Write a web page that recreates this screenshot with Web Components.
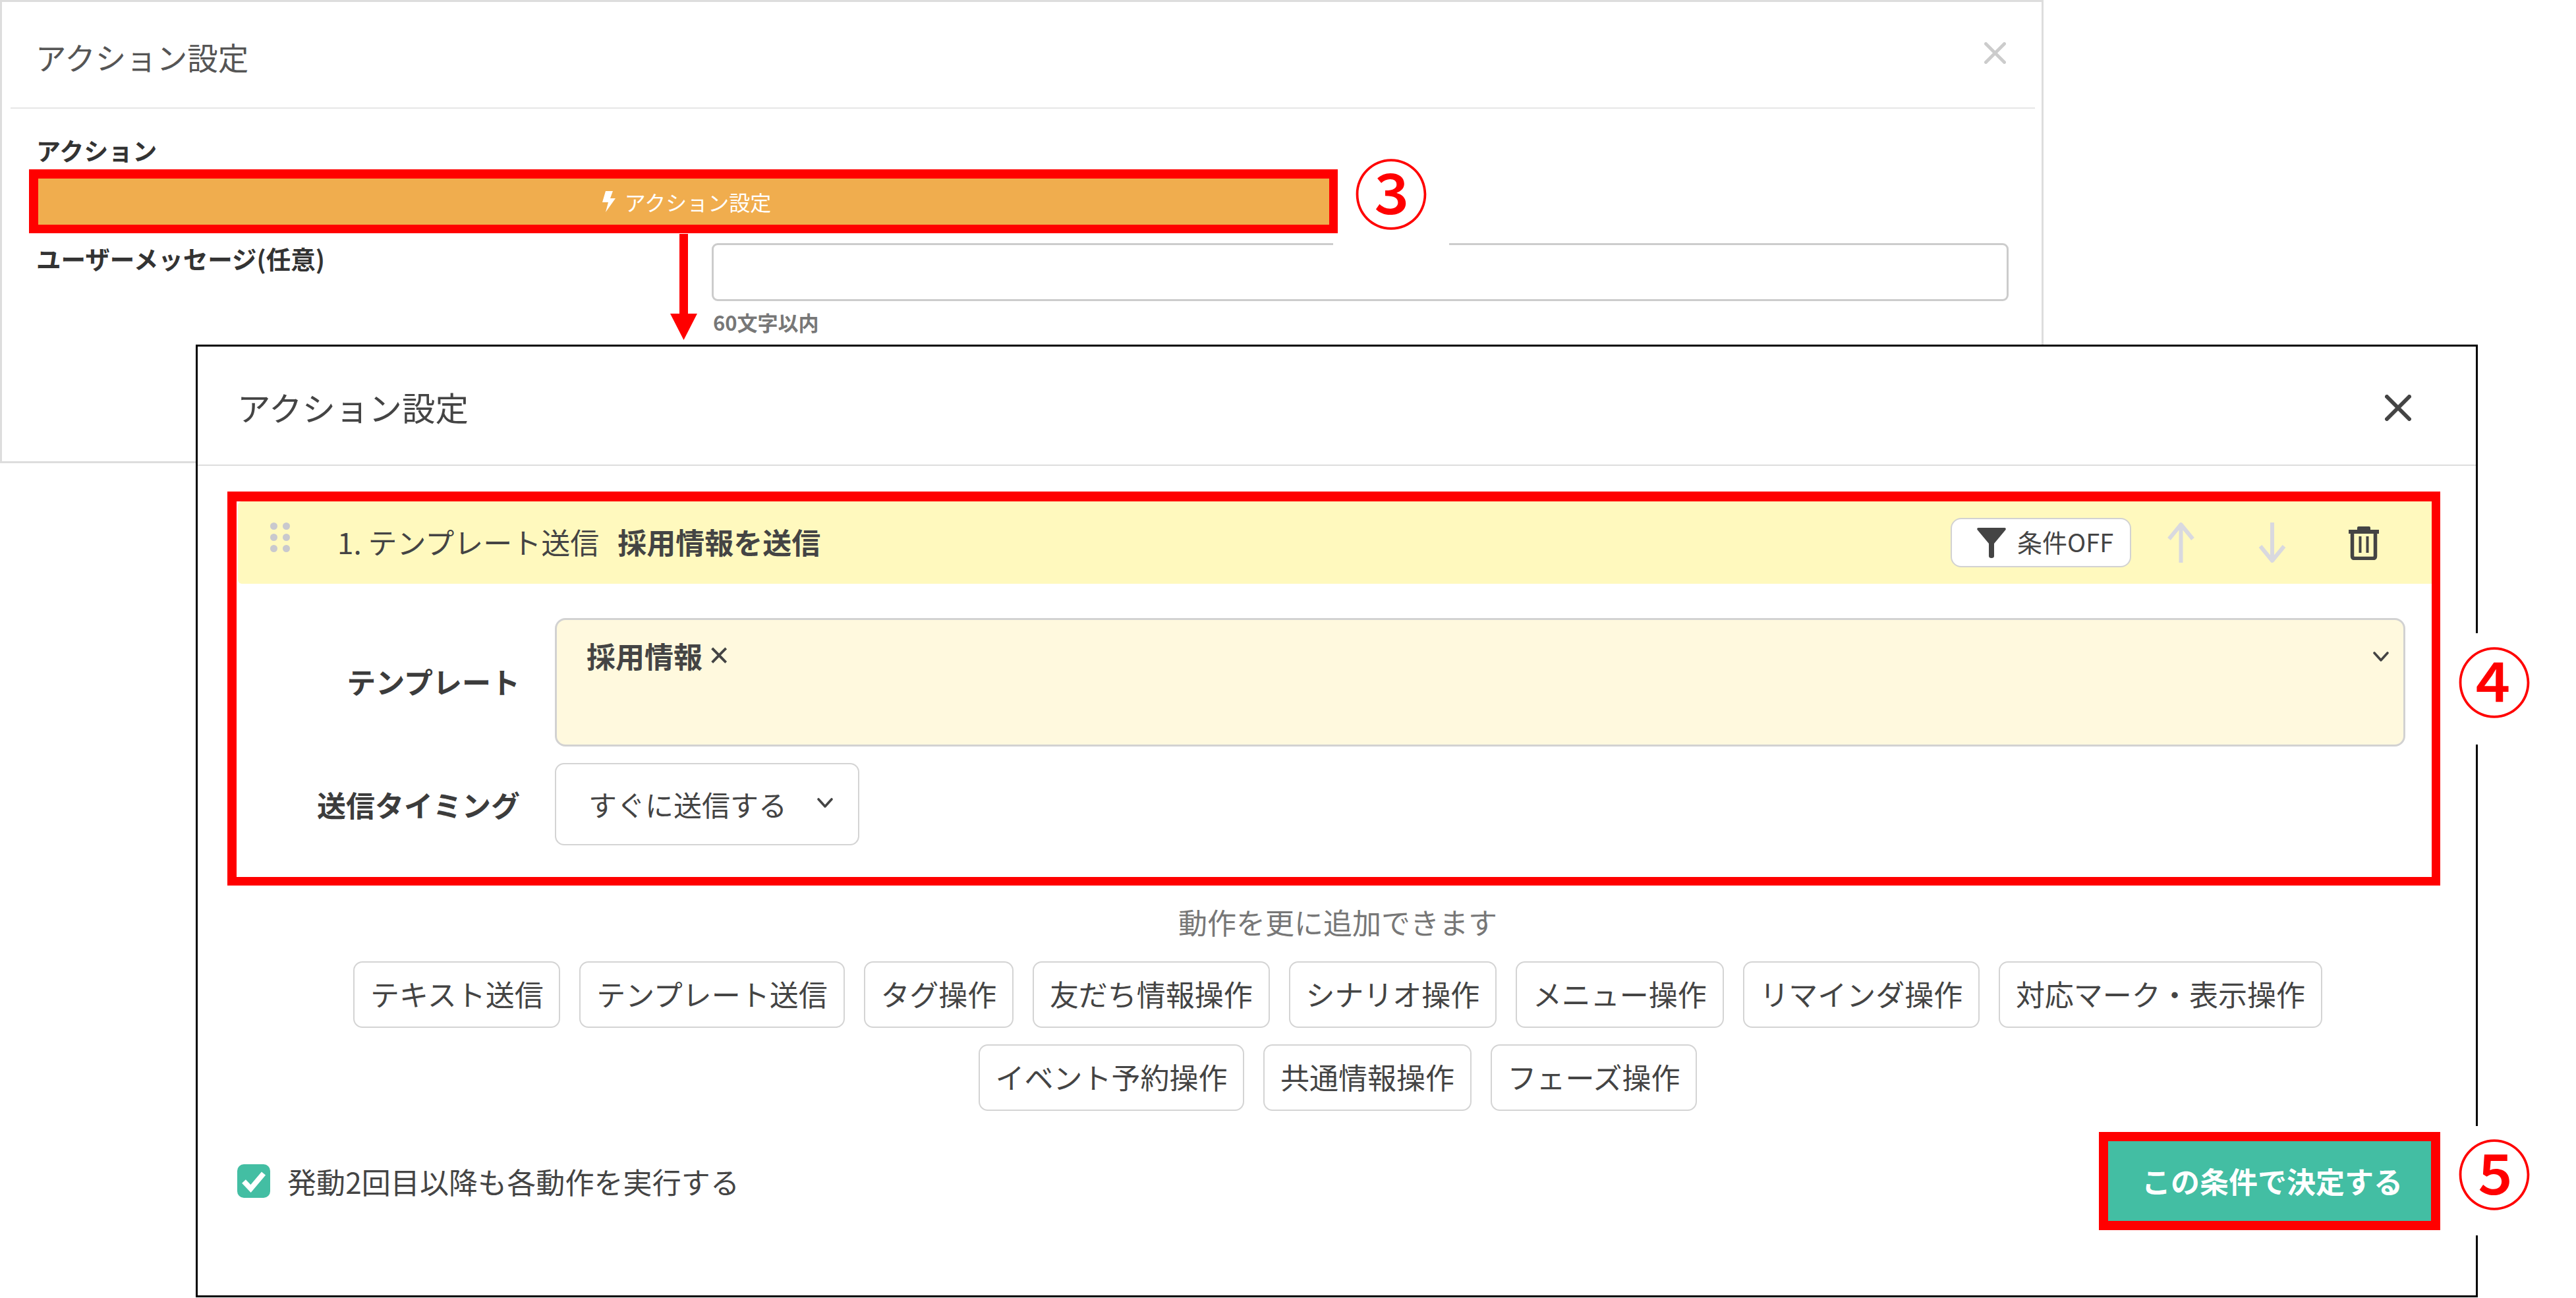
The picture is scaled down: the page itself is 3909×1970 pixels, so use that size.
<!DOCTYPE html>
<html lang="ja">
<head>
<meta charset="utf-8">
<title>アクション設定</title>
<style>
html,body{margin:0;padding:0;background:#fff}
body{width:3909px;height:1970px;overflow:hidden;position:relative;font-family:"Noto Sans CJK JP","Noto Sans",sans-serif;color:#444}
</style>
</head>
<body>
<action-panel></action-panel>
<flow-arrow></flow-arrow>
<action-modal></action-modal>
<num-badge style="--l:2023px;--t:230px;--w:176px;--h:146px;--pb:28px;--z:1">③</num-badge>
<num-badge style="--l:3712px;--t:961px;--w:146px;--h:169px;--pb:32px;--z:4">④</num-badge>
<num-badge style="--l:3712px;--t:1709px;--w:146px;--h:166px;--pb:30px;--z:4">⑤</num-badge>
<script>
function def(name, html){
  customElements.define(name, class extends HTMLElement{
    constructor(){super();this.attachShadow({mode:'open'}).innerHTML=html;}
  });
}

def('num-badge',`<style>
:host{display:flex;position:absolute;left:var(--l);top:var(--t);width:var(--w);height:var(--h);box-sizing:border-box;padding-bottom:var(--pb);z-index:var(--z);background:#fff;align-items:center;justify-content:center;color:#f00;font:500 114px/1 "Noto Sans CJK JP",sans-serif}
</style><slot></slot>`);

def('red-frame',`<style>
:host{display:block;box-sizing:border-box;border-style:solid;border-color:#f00;border-width:14px 13px 13px 14px;position:relative;z-index:2}
</style><slot></slot>`);

def('flow-arrow',`<style>
:host{display:block;position:absolute;left:1017px;top:355px;width:41px;height:161px;z-index:2}
svg{display:block}
</style><svg width="41" height="161" viewBox="0 0 41 161"><path fill="#f00" d="M14 0h13v121h14L20.500 161 0 121h14z"/></svg>`);

def('close-x',`<style>
:host{display:block;width:var(--s);height:var(--s)}
svg{display:block;width:100%;height:100%}
</style><svg viewBox="0 0 40 40"><path d="M3 3 37 37M37 3 3 37" fill="none" stroke="currentColor" stroke-width="6" stroke-linecap="round"/></svg>`);

def('chevron-down',`<style>
:host{display:block;width:24px;height:15px}
svg{display:block}
</style><svg width="24" height="15" viewBox="0 0 24 15"><path d="M2 2 12 13 22 2" fill="none" stroke="#444" stroke-width="3.600" stroke-linecap="round" stroke-linejoin="round"/></svg>`);

def('action-panel',`<style>
:host{display:block;position:absolute;left:0;top:0;width:3101px;height:703px;box-sizing:border-box;border:3px solid #ddd;background:#fff;color:#444}
.head{display:flex;justify-content:space-between;align-items:flex-start;height:162px;box-sizing:border-box;margin:0 10px 0 13px;padding:48px 44px 0 38px;border-bottom:2px solid #e6e6e6}
.title{font-size:46.500px;line-height:70px;color:#555}
close-x{--s:33px;margin-top:13px;color:#ccc}
.body{padding:34px 0 0 0}
.label{font-size:37px;line-height:58px;font-weight:700;color:#333;padding-left:52px}
red-frame{margin-left:41px;width:1986px;height:97px}
.btn{height:70px;background:#f0ad4e;color:#fff;display:flex;align-items:center;justify-content:center;gap:13px;font-size:32px;line-height:1;padding-left:8px;box-sizing:border-box}
.btn svg{display:block}
.row{display:flex;margin-top:15px;padding-left:52px}
.row .name{width:1025px;font-size:37.500px;line-height:46px;font-weight:700;color:#333;flex:none;white-space:nowrap}
.input{width:1968px;height:88px;box-sizing:border-box;border:3px solid #ccc;border-radius:9px}
.hint{font-size:31px;line-height:40px;font-weight:700;color:#777;margin:12px 0 0 2px}
</style>
<div class="head"><div class="title">アクション設定</div><close-x></close-x></div>
<div class="body">
  <div class="label">アクション</div>
  <red-frame><div class="btn"><svg width="22" height="32" viewBox="0 0 22 32"><path fill="#fff" d="M6 0h11l-4 11h8L6 32l4-15H1z"/></svg><span>アクション設定</span></div></red-frame>
  <div class="row"><div class="name">ユーザーメッセージ(任意)</div><div><div class="input"></div><div class="hint">60文字以内</div></div></div>
</div>`);

def('chip-btn',`<style>
:host{display:flex;align-items:center;justify-content:center;box-sizing:border-box;height:101px;padding:0 23.750px 3px;border:2.500px solid #d4d4d4;border-radius:14px;background:#fff;font-size:44px;line-height:1;color:#444;white-space:nowrap}
</style><slot></slot>`);

def('step-card',`<style>
:host{display:block;margin-left:2px;color:#444}
.bar{height:125px;background:#fff9be;border-radius:6px 0 0 6px;display:flex;align-items:center;font-size:44px;line-height:60px;padding-right:80px}
.grip{display:grid;grid-template-columns:11px 11px;gap:6px 8px;margin:-16px 72px 0 49px}
.grip i{width:11px;height:11px;border-radius:50%;background:#c9c9ce;display:block}
.step{white-space:nowrap;position:relative;top:-2px}
.name{font-weight:700;margin-left:28px;white-space:nowrap;position:relative;top:-2px}
.acts{margin-left:auto;display:flex;align-items:center}
.cond{width:274px;height:75px;box-sizing:border-box;background:#fff;border:2.500px solid #d2d2d2;border-radius:16px;display:flex;align-items:center;padding:0 0 3px 38px;gap:17px;font-size:38px;line-height:1;margin-right:55px}
.cond svg{margin-top:3px}
.acts svg{display:block}
.up{margin-right:97px}.down{margin-right:95px}
.fields{display:grid;grid-template-columns:428px 1fr;column-gap:53px;row-gap:25px;padding:52px 40px 48px 0}
.lab{font-size:44px;line-height:60px;font-weight:700;text-align:right;align-self:center;color:#3c3c3c;white-space:nowrap}
.lab.t{position:relative;top:-2px}
.tpl{height:195px;box-sizing:border-box;background:#fff9de;border:3px solid #d2d2d2;border-radius:16px;display:flex;justify-content:space-between;align-items:flex-start;padding:21px 22px 0 45px;font-size:44px;line-height:66px}
.tpl b{font-weight:700}
.tpl .x{font-family:"Noto Sans",sans-serif;font-size:54px;line-height:40px;margin-left:0}
.tpl chevron-down{margin-top:27px}
.sel{justify-self:start;width:462px;height:125px;box-sizing:border-box;border:2.500px solid #d4d4d4;border-radius:14px;display:flex;align-items:center;padding-left:49px;font-size:43px;line-height:1}
.sel chevron-down{margin-left:46px;margin-top:-4px}
</style>
<div class="bar">
  <div class="grip"><i></i><i></i><i></i><i></i><i></i><i></i></div>
  <span class="step">1. テンプレート送信</span><span class="name">採用情報を送信</span>
  <div class="acts">
    <div class="cond"><svg width="44" height="46" viewBox="0 0 44 46"><path fill="#444" d="M2 0h40q2.500 0 1.500 3L26 24v19q0 3-4 3t-4-3V24L.5 3Q-.5 0 2 0z"/></svg><span>条件OFF</span></div>
    <svg class="up" width="41" height="61" viewBox="0 0 41 61"><path d="M20.500 61V3M2.500 25 20.500 3l18 22" fill="none" stroke="#d9d9df" stroke-width="6" stroke-linejoin="round"/></svg>
    <svg class="down" width="42" height="61" viewBox="0 0 42 61"><path d="M21 0V58M3 36 21 58 39 36" fill="none" stroke="#d9d9df" stroke-width="6" stroke-linejoin="round"/></svg>
    <svg width="46" height="52" viewBox="0 0 46 52"><path d="M0 9h46" stroke="#444" stroke-width="6" fill="none"/><path d="M13 6V3q0-2 2-2h16q2 0 2 2v3z" fill="#444"/><path d="M5.500 9V46q0 3.500 3.500 3.500h28q3.500 0 3.500-3.500V9" fill="none" stroke="#444" stroke-width="5.500"/><path d="M17.500 16V41M28.500 16V41" stroke="#444" stroke-width="4" fill="none"/></svg>
  </div>
</div>
<div class="fields">
  <div class="lab t">テンプレート</div>
  <div class="tpl"><span><b>採用情報</b> <span class="x">×</span></span><chevron-down></chevron-down></div>
  <div class="lab">送信タイミング</div>
  <div class="sel"><span>すぐに送信する</span><chevron-down></chevron-down></div>
</div>`);

def('action-modal',`<style>
:host{display:flex;flex-direction:column;position:absolute;left:297px;top:523px;width:3463px;height:1446px;box-sizing:border-box;border:3px solid #000;background:#fff;z-index:3;color:#444}
.head{height:181px;box-sizing:border-box;flex:none;border-bottom:2px solid #ddd;display:flex;justify-content:space-between;align-items:flex-start;padding:56px 98px 0 60px}
.title{font-size:50.500px;line-height:70px;color:#444}
close-x{--s:40px;margin-top:17px;color:#444}
.body{padding:39px 54px 0 45px}
.more{margin-top:22px;padding-left:12px;text-align:center;font-size:44px;line-height:66px;color:#777}
.chips{display:flex;flex-wrap:wrap;justify-content:center;gap:25px 29px;margin-top:27px;padding-left:12px}
.foot{display:flex;justify-content:space-between;align-items:center;margin-top:32px}
.check{display:flex;align-items:center;gap:26px;padding-left:15px;font-size:44px;line-height:60px;color:#444}
.check svg{display:block}
.check span{letter-spacing:.1px}
.go{width:490px;height:121px;background:#43bea3;color:#fff;font-weight:700;font-size:44px;line-height:1;display:flex;align-items:center;justify-content:center;padding:0 0 2px 8px;box-sizing:border-box}
</style>
<div class="head"><div class="title">アクション設定</div><close-x></close-x></div>
<div class="body">
  <red-frame style="border-width:15px 13px 13px 14px"><step-card></step-card></red-frame>
  <div class="more">動作を更に追加できます</div>
  <div class="chips">
    <chip-btn>テキスト送信</chip-btn><chip-btn>テンプレート送信</chip-btn><chip-btn>タグ操作</chip-btn><chip-btn>友だち情報操作</chip-btn><chip-btn>シナリオ操作</chip-btn><chip-btn>メニュー操作</chip-btn><chip-btn>リマインダ操作</chip-btn><chip-btn>対応マーク・表示操作</chip-btn><chip-btn>イベント予約操作</chip-btn><chip-btn>共通情報操作</chip-btn><chip-btn>フェーズ操作</chip-btn>
  </div>
  <div class="foot">
    <div class="check"><svg width="50" height="51" viewBox="0 0 50 51"><rect width="50" height="51" rx="10" fill="#43bea3"/><path d="M10 26 20.500 37 40 14" fill="none" stroke="#fff" stroke-width="8"/></svg><span>発動2回目以降も各動作を実行する</span></div>
    <red-frame style="border-width:14px"><div class="go">この条件で決定する</div></red-frame>
  </div>
</div>`);
</script>
</body>
</html>
